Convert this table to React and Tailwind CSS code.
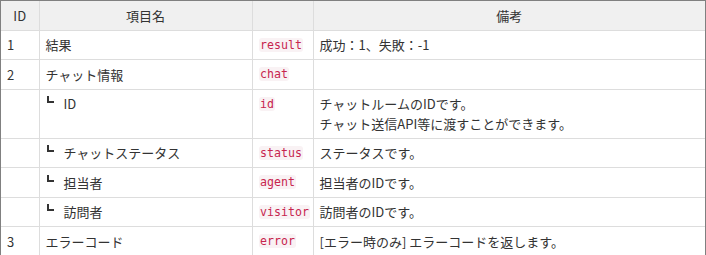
const rows = [
  { id: '1', name: '結果', key: 'result', note: ['成功：1、失敗：-1'] },
  { id: '2', name: 'チャット情報', key: 'chat', note: [] },
  { id: '', name: 'ID', child: true, key: 'id', note: ['チャットルームのIDです。', 'チャット送信API等に渡すことができます。'] },
  { id: '', name: 'チャットステータス', child: true, key: 'status', note: ['ステータスです。'] },
  { id: '', name: '担当者', child: true, key: 'agent', note: ['担当者のIDです。'] },
  { id: '', name: '訪問者', child: true, key: 'visitor', note: ['訪問者のIDです。'] },
  { id: '3', name: 'エラーコード', key: 'error', note: ['[エラー時のみ] エラーコードを返します。'] },
]

const cell = 'border border-[#dddddd] px-[6px] py-[4.5px] align-top text-left font-normal'

export default function App() {
  return (
    <div className="w-[706px] border border-[#808080] bg-white text-[13px] leading-[19.5px] text-[#333333] font-['Noto_Sans_CJK_JP',sans-serif]">
      <table className="w-full table-fixed border-collapse border-hidden">
        <colgroup>
          <col className="w-[38px]" />
          <col className="w-[213px]" />
          <col className="w-[61px]" />
          <col />
        </colgroup>
        <thead>
          <tr className="bg-[#f0f0f0]">
            <th className={`${cell} !text-center`}>ID</th>
            <th className={`${cell} !text-center`}>項目名</th>
            <th className={cell}></th>
            <th className={`${cell} !text-center`}>備考</th>
          </tr>
        </thead>
        <tbody>
          {rows.map((r, i) => (
            <tr key={i}>
              <td className={cell}>{r.id}</td>
              <td className={cell}>
                {r.child ? (
                  <div className="flex items-start h-[19.5px]">
                    <span className="block w-[7px] h-[7px] mt-[2px] ml-[1px] mr-[10px] border-l-2 border-b-2 border-[#333333]" />
                    <span>{r.name}</span>
                  </div>
                ) : r.name}
              </td>
              <td className={cell}>
                <div className="h-[19.5px] flex items-center">
                  <code className="px-[1.5px] rounded-[3px] bg-[#f9f2f4] text-[#c7254e] text-[11.6px] leading-[14px] font-['DejaVu_Sans_Mono',monospace]">{r.key}</code>
                </div>
              </td>
              <td className={cell}>
                {r.note.map((n, j) => <div key={j}>{n}</div>)}
              </td>
            </tr>
          ))}
        </tbody>
      </table>
    </div>
  )
}
